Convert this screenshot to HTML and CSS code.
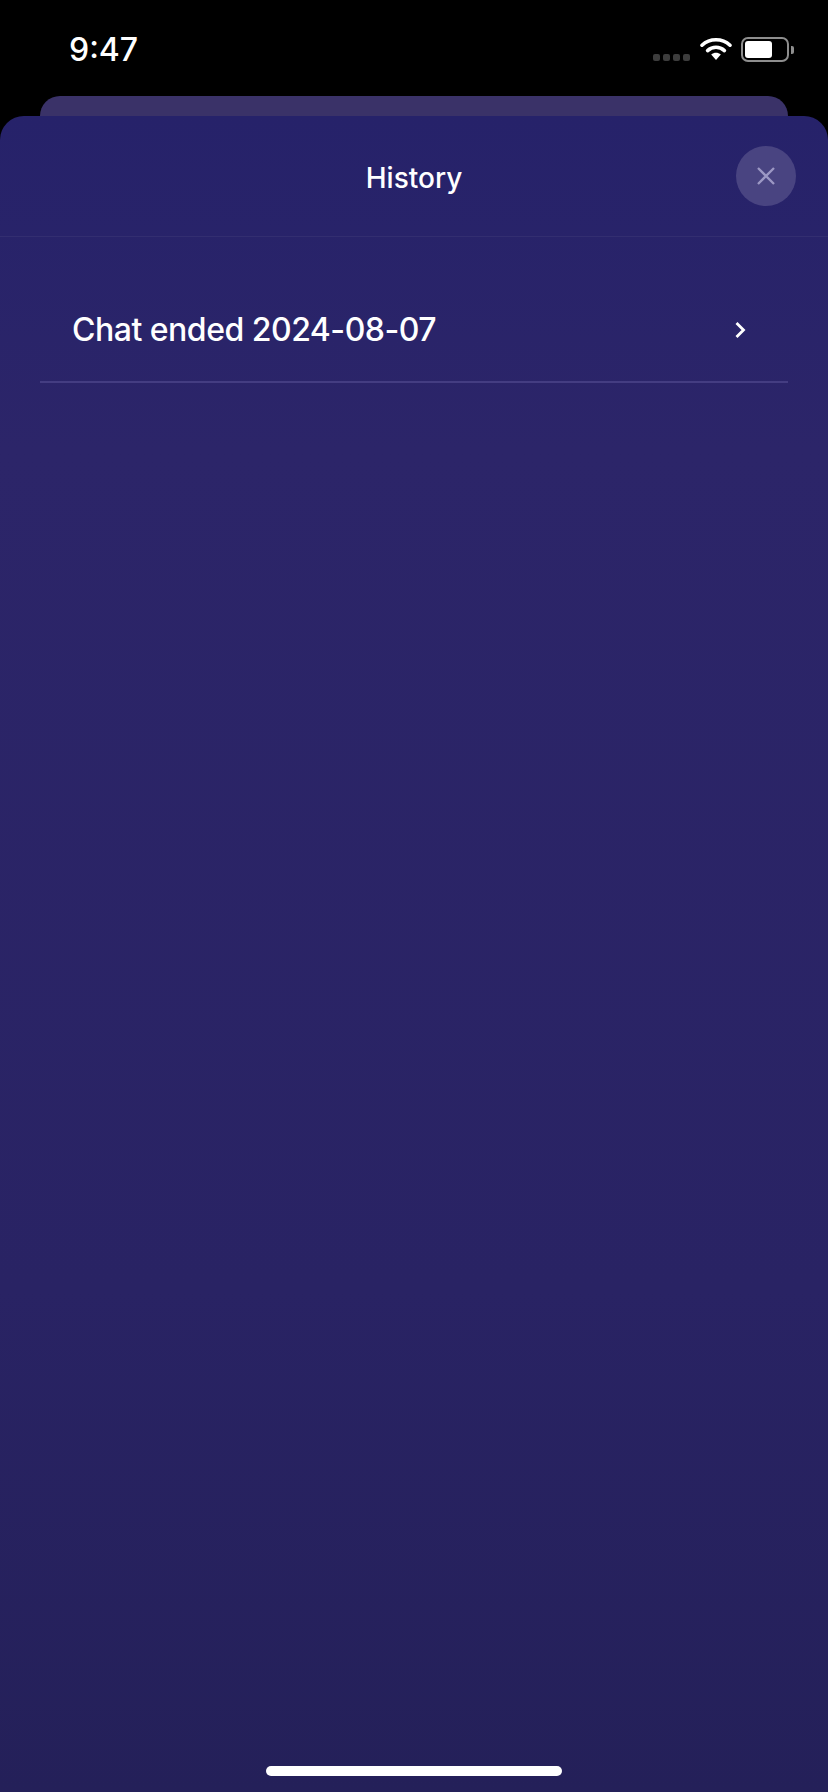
FILE: index.html
```html
<!DOCTYPE html>
<html lang="en">
<head>
<meta charset="utf-8">
<title>History</title>
<link rel="stylesheet" href="styles.css">
</head>
<body>
<div class="screen">
  <div class="status">
    <span class="time">9:47</span>
    <div class="status-icons">
      <div class="dots"><i></i><i></i><i></i><i></i></div>
      <svg class="wifi" width="32" height="24" viewBox="0 0 32 24"><path d="M2 8.200C9.800 .9 22.200 .9 30 8.200" fill="none" stroke="#fff" stroke-width="3.600" stroke-linecap="round"/><path d="M7.600 13.600c4.800-4.400 12-4.400 16.800 0" fill="none" stroke="#fff" stroke-width="3.600" stroke-linecap="round"/><path d="M11.200 17.600c2.800-2.400 6.800-2.400 9.600 0L16 23z" fill="#fff"/></svg>
      <div class="battery"><div class="battery-level"></div></div>
      <div class="battery-cap"></div>
    </div>
  </div>
  <div class="back-card"></div>
  <main class="sheet">
    <header class="sheet-head">
      <h1 class="title">History</h1>
      <button class="close" aria-label="Close">
        <svg width="20" height="20" viewBox="0 0 20 20"><path d="M2 2l16 16M18 2L2 18" stroke="#9c98c4" stroke-width="2.300" fill="none"/></svg>
      </button>
    </header>
    <ul class="list">
      <li class="row">
        <span class="row-text">Chat ended 2024-08-07</span>
        <svg class="chev" width="12" height="18" viewBox="0 0 12 18"><path d="M2.500 2L9.500 9 2.500 16" stroke="#fff" stroke-width="2.800" fill="none"/></svg>
      </li>
    </ul>
    <div class="spacer"></div>
    <div class="home-wrap"><div class="home-bar"></div></div>
  </main>
</div>
</body>
</html>
```
FILE: styles.css
```css
* { box-sizing: border-box; }
html, body { margin: 0; padding: 0; background: #000; }
.screen {
  width: 828px;
  height: 1792px;
  display: flex;
  flex-direction: column;
  overflow: hidden;
  background: #000;
  font-family: "Inter", "Liberation Sans", sans-serif;
  color: #fff;
}
.status {
  height: 96px;
  flex: none;
  display: flex;
  justify-content: space-between;
  padding: 30px 34px 0 69px;
}
.time {
  font-size: 32px;
  line-height: 40px;
  font-weight: 500;
}
.status-icons { display: flex; align-items: flex-start; padding-top: 7px; }
.dots { display: flex; gap: 3px; margin: 17px 10px 0 0; }
.dots i { width: 7px; height: 7px; border-radius: 2px; background: #3d3d3d; display: block; }
.wifi { margin-right: 9px; }
.battery {
  width: 48px;
  height: 25px;
  border: 2px solid #8e8e8e;
  border-radius: 7px;
  padding: 2px;
}
.battery-level { width: 27px; height: 17px; background: #fff; border-radius: 3px; }
.battery-cap {
  width: 3px;
  height: 8px;
  margin: 9px 0 0 2px;
  background: #8e8e8e;
  border-radius: 0 2px 2px 0;
}
.back-card {
  height: 20px;
  flex: none;
  margin: 0 40px;
  background: #3a3268;
  border-radius: 24px 24px 0 0;
}
.sheet {
  flex: 1;
  display: flex;
  flex-direction: column;
  border-radius: 24px 24px 0 0;
  background: linear-gradient(180deg, #26226a 0%, #2c2569 20%, #292364 70%, #242059 100%);
}
.sheet-head {
  height: 121px;
  flex: none;
  display: flex;
  align-items: center;
  justify-content: center;
  position: relative;
  padding-top: 3px;
  border-bottom: 1px solid #332e70;
}
.title {
  margin: 0;
  font-size: 28px;
  font-weight: 500;
  line-height: 36px;
}
.close {
  position: absolute;
  right: 32px;
  top: 30px;
  width: 60px;
  height: 60px;
  padding: 0;
  border: 0;
  border-radius: 50%;
  background: #494481;
  display: flex;
  align-items: center;
  justify-content: center;
}
.list { list-style: none; margin: 0 40px; padding: 0; }
.row {
  height: 146px;
  display: flex;
  align-items: center;
  justify-content: space-between;
  padding: 42px 42px 0 32px;
  border-bottom: 2px solid #443d82;
}
.row-text { font-size: 32px; font-weight: 500; line-height: 40px; letter-spacing: -0.5px; }
.spacer { flex: 1; }
.home-wrap { display: flex; justify-content: center; padding-bottom: 16px; }
.home-bar { width: 296px; height: 10px; border-radius: 5px; background: #fff; }
```
